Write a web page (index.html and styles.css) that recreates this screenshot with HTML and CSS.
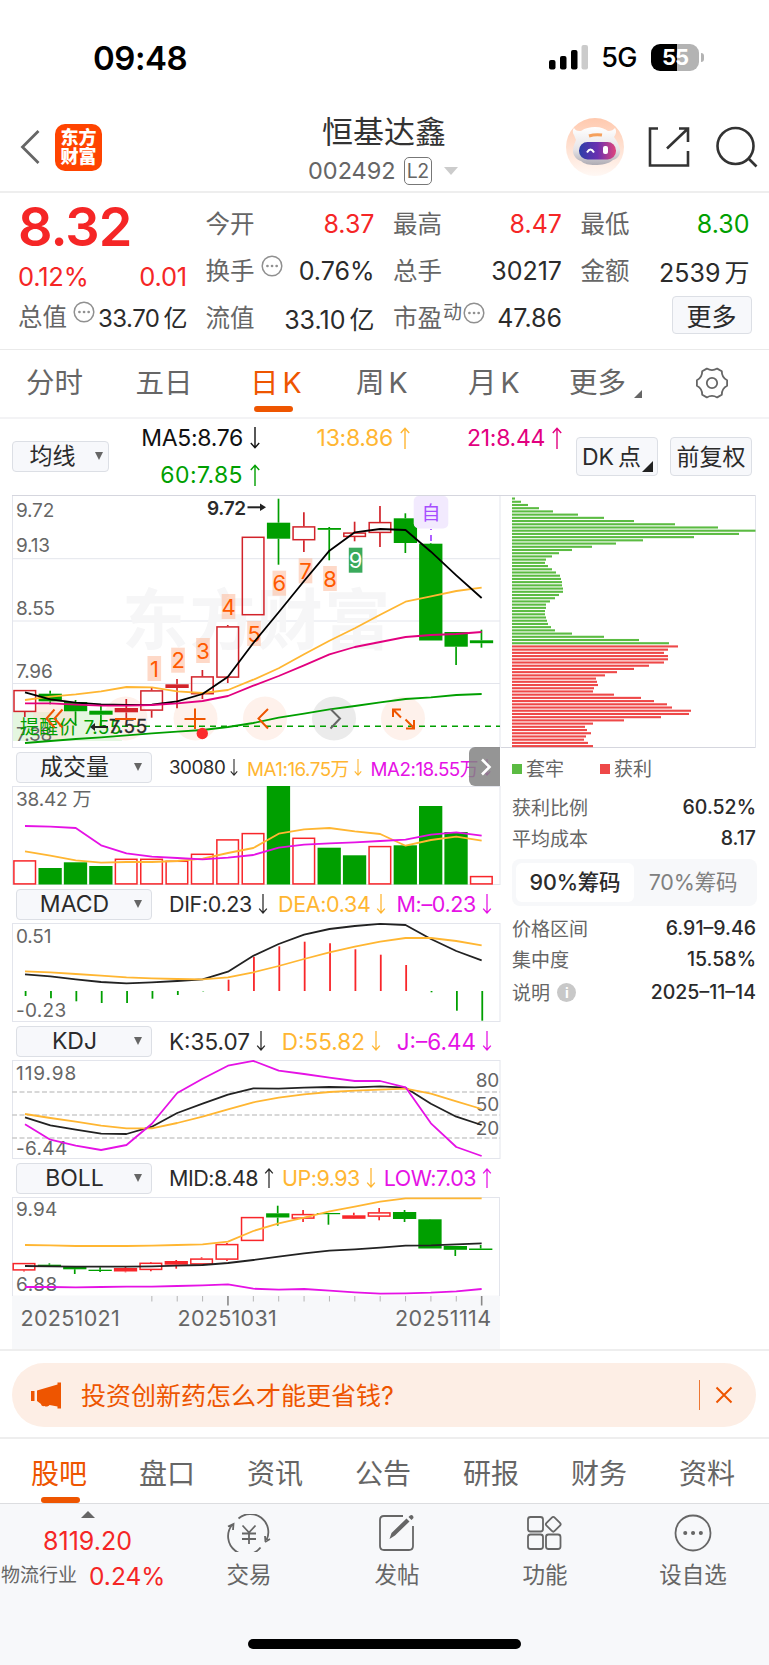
FILE: index.html
```html
<!DOCTYPE html>
<html lang="zh-CN">

<head>
    <meta charset="UTF-8">
    <meta name="viewport" content="width=device-width, initial-scale=1.0">
    <title>恒基达鑫 002492</title>
    <link rel="stylesheet" href="styles.css">
</head>

<body>

    <!-- Iconos compartidos -->
    <svg class="defs" width="0" height="0">
        <symbol id="i-up" viewBox="0 0 10 22"><path d="M5 22V1.5M.8 6L5 1.2 9.2 6" /></symbol>
        <symbol id="i-down" viewBox="0 0 10 22"><path d="M5 0v20.5M.8 16L5 20.8 9.2 16" /></symbol>
        <symbol id="i-more" viewBox="0 0 22 22"><circle cx="11" cy="11" r="9.8" /><path d="M6.4 11h.1M11 11h.1M15.6 11h.1" stroke-width="2.6" stroke-linecap="round" /></symbol>
    </svg>

    <div class="status">
        <span class="clock">09:48</span>
        <svg class="signal" width="40" height="25" viewBox="0 0 40 25">
            <rect x="0" y="15" width="6.5" height="9.5" rx="2" />
            <rect x="11" y="11" width="6.5" height="13.5" rx="2" />
            <rect x="22" y="5" width="6.5" height="19.5" rx="2" />
            <rect x="32.5" y="0" width="6.5" height="24.5" rx="2" fill="#cbcbcb" />
        </svg>
        <span class="net">5G</span>
        <span class="battery">55</span>
        <i class="nub"></i>
    </div>

    <header>
        <svg class="back" width="20" height="36" viewBox="0 0 20 36"><path d="M18.5 2L2.500 18l16 16" /></svg>
        <div class="logo">东方<br>财富</div>
        <div class="stock">
            <h1>恒基达鑫</h1>
            <p>002492 <b>L2</b> <i class="caret"></i></p>
        </div>
        <svg class="robot" width="58" height="58" viewBox="0 0 58 58">
            <defs>
                <linearGradient id="halo" x1="0" y1="0" x2="0" y2="1"><stop offset="0" stop-color="#ffc9ae" /><stop offset="1" stop-color="#fff8f4" /></linearGradient>
                <linearGradient id="visor" x1="0" y1="0" x2="1" y2="0"><stop offset="0" stop-color="#2b3fa8" /><stop offset=".5" stop-color="#6a2fb0" /><stop offset="1" stop-color="#e0457c" /></linearGradient>
                <linearGradient id="shell" x1="0" y1="0" x2="0" y2="1"><stop offset="0" stop-color="#fff" /><stop offset=".6" stop-color="#e6e3e6" /><stop offset="1" stop-color="#aeabb3" /></linearGradient>
            </defs>
            <circle cx="29" cy="29" r="29" fill="url(#halo)" />
            <path d="M8 17c-2-3-1-6 0-7 2 3 4 3 7 3 4-3 9-4 14-4 6 0 10 2 13 4 4 0 5-1 7-3 2 3 1 6-1 9 3 4 5 8 6 12 1 6-3 10-7 11-4 4-12 5-18 5s-11-1-14-4c-4-1-8-5-8-10 0-5 2-8 3-11z" fill="url(#shell)" />
            <path d="M23 18q6-2 13-1" stroke="#f5a05c" stroke-width="3" fill="none" />
            <rect x="13" y="24" width="37" height="17.500" rx="8.500" fill="url(#visor)" />
            <path d="M21 34.500q3.500-6 7 0" stroke="#fff" stroke-width="2" fill="none" />
            <rect x="37" y="28" width="5" height="8" rx="2" fill="#fff" />
        </svg>
        <svg class="share" width="42" height="40" viewBox="0 0 42 40"><path d="M10 1.500H2v37h38V24M31 1.500h9V15M40 1.500L19 21.500" /></svg>
        <svg class="search" width="42" height="42" viewBox="0 0 42 42"><circle cx="19.500" cy="20" r="18" /><path d="M32 32l8.500 8.500" /></svg>
    </header>

    <section class="quote">
        <div class="price">
            <strong>8.32</strong>
            <div class="red"><span>0.12%</span><span>0.01</span></div>
            <div class="row"><label>总值</label><svg class="dots"><use href="#i-more" /></svg><span>33.70<u>亿</u></span></div>
        </div>
        <div class="col">
            <div class="row"><label>今开</label><span class="red">8.37</span></div>
            <div class="row"><label>换手</label><svg class="dots"><use href="#i-more" /></svg><span>0.76%</span></div>
            <div class="row"><label>流值</label><span>33.10<u>亿</u></span></div>
        </div>
        <div class="col">
            <div class="row"><label>最高</label><span class="red">8.47</span></div>
            <div class="row"><label>总手</label><span>30217</span></div>
            <div class="row"><label>市盈<sup>动</sup></label><svg class="dots near"><use href="#i-more" /></svg><span>47.86</span></div>
        </div>
        <div class="col">
            <div class="row"><label>最低</label><span class="green">8.30</span></div>
            <div class="row"><label>金额</label><span>2539<u>万</u></span></div>
            <button class="btn more">更多</button>
        </div>
    </section>

    <nav class="periods">
        <a>分时</a>
        <a>五日</a>
        <a class="active">日<u>K</u></a>
        <a>周<u>K</u></a>
        <a>月<u>K</u></a>
        <a>更多<i class="corner"></i></a>
        <a><svg class="gear" width="34" height="32" viewBox="-17 -16 34 32"><path d="M15.100 2.700Q9.700 5.600 9.800 11.700L5.200 14.400Q0 11.200-5.200 14.400L-9.800 11.700Q-9.700 5.600-15.100 2.700V-2.700Q-9.700-5.600-9.800-11.700L-5.200-14.400Q0-11.200 5.200-14.400L9.800-11.700Q9.700-5.600 15.100-2.700Z" /><circle r="5.200" /></svg></a>
    </nav>

    <div class="averages">
        <button class="btn select small">均线<i></i></button>
        <div class="ma">
            <span>MA5:8.76<svg><use href="#i-down" /></svg></span>
            <span class="yellow">13:8.86<svg><use href="#i-up" /></svg></span>
            <span class="pink">21:8.44<svg><use href="#i-up" /></svg></span>
            <span class="green wide">60:7.85<svg><use href="#i-up" /></svg></span>
        </div>
        <button class="btn dk">DK<u>点</u><i class="corner"></i></button>
        <button class="btn">前复权</button>
    </div>

    <main>
        <div class="charts">
            <svg id="kline" width="489" height="253" viewBox="12 495 489 253"></svg>

            <div class="bar">
                <button class="btn select">成交量<i></i></button>
                <div class="legend volume">
                    <span>30080<svg><use href="#i-down" /></svg></span>
                    <span class="yellow">MA1:16.75万<svg><use href="#i-down" /></svg></span>
                    <span class="magenta">MA2:18.55万<svg><use href="#i-down" /></svg></span>
                </div>
                <div class="drawer"><svg width="12" height="18" viewBox="0 0 12 18"><path d="M2 1.500L9.500 9 2 16.500" /></svg></div>
            </div>
            <svg id="volume" width="489" height="99" viewBox="12 786 489 99"></svg>

            <div class="bar">
                <button class="btn select">MACD<i></i></button>
                <div class="legend">
                    <span>DIF:0.23<svg><use href="#i-down" /></svg></span>
                    <span class="yellow">DEA:0.34<svg><use href="#i-down" /></svg></span>
                    <span class="magenta">M:–0.23<svg><use href="#i-down" /></svg></span>
                </div>
            </div>
            <svg id="macd" width="489" height="99" viewBox="12 923 489 99"></svg>

            <div class="bar">
                <button class="btn select">KDJ<i></i></button>
                <div class="legend kdj">
                    <span>K:35.07<svg><use href="#i-down" /></svg></span>
                    <span class="yellow">D:55.82<svg><use href="#i-down" /></svg></span>
                    <span class="magenta">J:–6.44<svg><use href="#i-down" /></svg></span>
                </div>
            </div>
            <svg id="kdj" width="489" height="99" viewBox="12 1060 489 99"></svg>

            <div class="bar">
                <button class="btn select">BOLL<i></i></button>
                <div class="legend boll">
                    <span>MID:8.48<svg><use href="#i-up" /></svg></span>
                    <span class="yellow">UP:9.93<svg><use href="#i-down" /></svg></span>
                    <span class="magenta">LOW:7.03<svg><use href="#i-up" /></svg></span>
                </div>
            </div>
            <svg id="boll" width="489" height="152" viewBox="12 1197 489 152"></svg>
        </div>

        <aside>
            <svg id="chips" width="256" height="253" viewBox="501 495 256 253"></svg>
            <div class="key"><span><i></i>套牢</span><span><i class="win"></i>获利</span></div>
            <div class="info"><span>获利比例</span><b>60.52%</b></div>
            <div class="info"><span>平均成本</span><b>8.17</b></div>
            <div class="toggle"><span class="on">90%筹码</span><span>70%筹码</span></div>
            <div class="info"><span>价格区间</span><b>6.91–9.46</b></div>
            <div class="info"><span>集中度</span><b>15.58%</b></div>
            <div class="info last"><span>说明 <em>i</em></span><b>2025–11–14</b></div>
        </aside>
    </main>

    <div class="promo">
        <div class="banner">
            <svg width="31" height="27" viewBox="0 0 31 27"><path d="M0 9h3.500v10H0zM6 8.500L26.500 2.500V.5H30v26h-3.500v-2l-8-1.500c-1 1.500-3.500 2-5 1-2 .500-3.500-.500-3.500-2L6 19z" /></svg>
            <span>投资创新药怎么才能更省钱?</span>
            <svg class="close" width="18" height="18" viewBox="0 0 18 18"><path d="M1.500 1.500l15 15M16.500 1.500l-15 15" /></svg>
        </div>
    </div>

    <nav class="sections">
        <a class="active">股吧</a>
        <a>盘口</a>
        <a>资讯</a>
        <a>公告</a>
        <a>研报</a>
        <a>财务</a>
        <a>资料</a>
    </nav>

    <footer>
        <div class="index">
            <i></i>
            <strong>8119.20</strong>
            <p>物流行业 <b>0.24%</b></p>
        </div>
        <a>
            <svg width="44" height="38" viewBox="0 0 44 38"><path d="M11.500 4.500A18 18 0 0 1 39.500 26M38.500 28l-.5-6M38 28l5-3M33.500 33.500A18 18 0 0 1 5 11M1 12.500l5.500-2.500-.5 6M15.500 11.500l6.500 7 6.500-7M22 18.500V30M15 19.500h14M15 25h14" /></svg>
            <span>交易</span>
        </a>
        <a>
            <svg width="44" height="38" viewBox="0 0 44 38"><path d="M28 2H9Q5 2 5 6v26q0 4 4 4h25q4 0 4-4V12" /><path d="M14.500 25l2-6L31.500 4.500l3 3L20 21.500zM33.500 3l1.500-1.500q2-1 3 .5t0 2.500L36.500 6z" fill="#666" stroke="none" /></svg>
            <span>发帖</span>
        </a>
        <a>
            <svg width="44" height="38" viewBox="0 0 44 38"><rect x="5" y="3" width="15" height="14.500" rx="2.500" /><rect x="5" y="20.500" width="15" height="14.500" rx="2.500" /><rect x="23" y="20.500" width="14.500" height="14.500" rx="2.500" /><rect x="24.500" y="4.500" width="11.500" height="11.500" rx="2" transform="rotate(45 30.250 10.250)" /></svg>
            <span>功能</span>
        </a>
        <a>
            <svg width="44" height="38" viewBox="0 0 44 38"><circle cx="22" cy="19" r="17.500" /><path d="M14.200 19h.1M22 19h.1M29.800 19h.1" stroke-width="4" stroke-linecap="round" /></svg>
            <span>设自选</span>
        </a>
        <div class="home"></div>
    </footer>

    <script src="script.js"></script>
</body>

</html>
```
FILE: styles.css
```css
* {
    box-sizing: border-box;
}

body {
    font-family: Inter, "Noto Sans CJK SC", sans-serif;
    width: 769px;
    margin: 0;
    background: #fff;
    color: #2b2b2b;
}

svg {
    display: block;
    flex: none;
    fill: none;
}

.defs {
    position: absolute;
}

h1, p {
    margin: 0;
    font-weight: 400;
}

i, em {
    font-style: normal;
}

/* Unidad separada de la cifra */
u {
    margin-left: 4px;
    text-decoration: none;
}

.red { color: #f52626; }
.green { color: #009f00; }
.yellow { color: #ffb632; }
.pink { color: #e2007f; }
.magenta { color: #e512e5; }

/* Barra de estado */
.status {
    height: 107px;
    padding: 8px 65px 0 93px;
    display: flex;
    align-items: center;
    color: #000;
}

.clock {
    font-size: 33px;
    font-weight: 600;
    letter-spacing: -0.5px;
    margin-right: auto;
}

.signal {
    fill: #000;
}

.net {
    font-size: 27px;
    font-weight: 500;
    letter-spacing: -0.5px;
    margin: 0 14px 0 12px;
}

.battery {
    width: 48px;
    height: 27px;
    border-radius: 9px;
    background: linear-gradient(90deg, #000 55%, #b3b3b3 55%);
    color: #fff;
    font-size: 22px;
    font-weight: 700;
    line-height: 27px;
    letter-spacing: -1px;
    text-align: center;
}

.nub {
    width: 3px;
    height: 9px;
    margin-left: 2px;
    border-radius: 0 4px 4px 0;
    background: #b3b3b3;
}

/* Cabecera */
header {
    height: 86px;
    padding: 0 11px 4px 20px;
    display: flex;
    align-items: center;
    border-bottom: 2px solid #eee;
}

.back path {
    stroke: #666;
    stroke-width: 2.8;
}

.logo {
    flex: none;
    width: 47px;
    height: 47px;
    margin: 0 186px 0 15px;
    padding-top: 4px;
    border-radius: 10px;
    background: #ff4400;
    color: #fff;
    font-size: 18px;
    font-weight: 900;
    line-height: 19.5px;
    text-align: center;
}

.stock {
    flex: none;
    width: 192px;
    padding-top: 9px;
    text-align: center;
    white-space: nowrap;
}

.stock h1 {
    font-size: 31px;
    line-height: 38px;
    color: #333;
}

.stock p {
    display: flex;
    align-items: center;
    height: 40px;
    padding-left: 20px;
    font-size: 23.5px;
    color: #666;
}

.stock b {
    width: 28px;
    height: 28px;
    margin: 0 12px 0 8px;
    border: 1.5px solid #777;
    border-radius: 5px;
    font-size: 19.5px;
    font-weight: 400;
    line-height: 27px;
    letter-spacing: -0.5px;
}

.caret {
    border: 7px solid transparent;
    border-top: 8px solid #ccc;
    border-bottom: 0;
}

.robot {
    margin: 0 24px 0 86px;
}

.share, .search {
    stroke: #333;
    stroke-width: 2.6;
}

.search {
    margin-left: 26px;
}

/* Cotización */
.quote {
    display: grid;
    grid-template-columns: repeat(4, 169px);
    column-gap: 18.500px;
    height: 157px;
    padding: 7px 0 0 18px;
    border-bottom: 1px solid #eaeaea;
    font-size: 25px;
}

.price strong {
    display: block;
    height: 54px;
    font-size: 54px;
    font-weight: 600;
    line-height: 54px;
    letter-spacing: -1px;
    color: #f52626;
}

.price .red {
    display: flex;
    justify-content: space-between;
    font-size: 25.5px;
    line-height: 46px;
    letter-spacing: -0.2px;
}

.row {
    display: flex;
    align-items: center;
    height: 47px;
    white-space: nowrap;
}

.price .row {
    height: 33px;
    font-size: 24px;
    letter-spacing: -0.5px;
}

.row span {
    margin-left: auto;
}

.row label {
    padding-bottom: 3px;
    font-size: 24.5px;
    letter-spacing: 0;
    color: #666;
}

.row sup {
    font-size: 19px;
    line-height: 1;
    vertical-align: 8px;
    margin-left: 1px;
}

.dots {
    width: 22px;
    height: 22px;
    margin: 0 0 10px 6px;
    stroke: #909090;
    stroke-width: 1.5;
}

.dots.near {
    margin-left: 1px;
}

.btn {
    border: 1px solid #dcdfe5;
    border-radius: 4px;
    background: #f7f8fb;
    font-family: inherit;
    color: #2b2b2b;
    padding: 0 0 3px;
    white-space: nowrap;
}

.more {
    display: block;
    width: 80px;
    height: 38px;
    margin: 2px 0 0 91px;
    font-size: 25px;
}

/* Periodos */
.periods {
    display: flex;
    align-items: center;
    height: 69px;
    padding: 0 0 2px 26px;
    border-bottom: 2px solid #f3f3f5;
    font-size: 28.5px;
    color: #666;
}

.periods a {
    position: relative;
    width: 109.500px;
    white-space: nowrap;
    line-height: 67px;
}

.periods a:nth-child(3) { width: 106px; margin-left: 5px; }
.periods a:nth-child(4) { width: 112px; }
.periods a:nth-child(5) { width: 101px; }
.periods a:nth-child(6) { width: 126px; }
.periods a:nth-child(7) { width: 40px; }

.periods .active, .sections .active {
    color: #ee5500;
}

.periods .active::after, .sections .active::after {
    content: "";
    position: absolute;
    left: 4px;
    bottom: 4px;
    width: 39px;
    height: 6px;
    border-radius: 3px;
    background: #ee5500;
}

.corner {
    display: inline-block;
    margin-left: 8px;
    border-left: 8px solid transparent;
    border-bottom: 8px solid #666;
    vertical-align: -5px;
}

.gear {
    stroke: #666;
    stroke-width: 1.8;
    stroke-linejoin: round;
}

/* Medias móviles */
.averages {
    display: flex;
    height: 76px;
    padding-left: 12px;
    font-size: 23px;
}

.averages > .btn {
    width: 82px;
    height: 39px;
    margin: 18px 12px 0 0;
    font-size: 23px;
}

.averages > .dk {
    position: relative;
    padding-left: 5px;
    text-align: left;
}

.dk .corner {
    position: absolute;
    right: 4px;
    bottom: 3px;
    border-left-width: 11px;
    border-bottom: 11px solid #222;
}

.ma {
    display: grid;
    grid-template-columns: 124px 150px 152px;
    grid-auto-rows: 37px;
    width: 440px;
    color: #111;
}

.ma span {
    display: flex;
    align-items: center;
    justify-content: flex-end;
    letter-spacing: -0.3px;
    white-space: nowrap;
}

.ma .wide {
    letter-spacing: 0.4px;
}

.ma svg, .legend svg {
    width: 10px;
    height: 22px;
    margin-left: 7px;
    stroke: currentColor;
    stroke-width: 1.4;
}

.select {
    position: relative;
    width: 136px;
    height: 31px;
    padding: 0 19px 2px 0;
    font-size: 23px;
    line-height: 28px;
    text-align: center;
}

.select i {
    position: absolute;
    right: 9px;
    top: 10px;
    border: 4.5px solid transparent;
    border-top: 8px solid #666;
    border-bottom: 0;
}

.averages > .small {
    width: 97px;
    height: 31px;
    margin: 22px 27px 0 0;
    padding-right: 16px;
}

.small i {
    right: 5px;
}

/* Gráficos */
main {
    display: flex;
    padding-left: 12px;
}

.charts {
    width: 489px;
}

.bar {
    position: relative;
    display: flex;
    align-items: center;
    height: 38px;
    padding-left: 4px;
}

.legend {
    display: flex;
    flex: 1;
    align-items: center;
    justify-content: space-between;
    padding: 0 9px 0 17px;
    font-size: 21.5px;
    letter-spacing: -0.35px;
    white-space: nowrap;
}

.legend.volume {
    font-size: 18.8px;
    letter-spacing: -0.5px;
}

.legend.kdj {
    font-size: 22.5px;
    letter-spacing: 0;
}

.legend.boll {
    letter-spacing: -0.5px;
}

.legend span {
    display: flex;
    align-items: center;
}

.legend svg {
    height: 20px;
    margin-left: 6px;
}

.legend.volume svg {
    height: 17px;
    margin-left: 4px;
}

.drawer {
    position: absolute;
    right: 1px;
    top: -1px;
    width: 31px;
    height: 39px;
    padding: 11px 0 0 11px;
    border-radius: 6px 0 0 6px;
    background: rgba(130, 130, 130, 0.85);
}

.drawer path {
    stroke: #fff;
    stroke-width: 2.6;
}

.charts text {
    font-size: 19px;
    fill: #666;
    letter-spacing: -0.2px;
}

.charts text.mark {
    font-size: 66px;
    font-weight: 700;
    fill: #f6f6f7;
}

.charts text.strong {
    font-weight: 600;
    fill: #2b2b2b;
}

.charts text.num {
    font-size: 22px;
    fill: #ff5a00;
    text-anchor: middle;
}

.charts text.date {
    font-size: 21.5px;
}

/* Panel de costes */
aside {
    width: 256px;
    color: #666;
    font-size: 19px;
}

.key {
    display: flex;
    height: 43px;
    padding-left: 11px;
    line-height: 43px;
}

.key span {
    width: 88px;
}

.key i {
    display: inline-block;
    width: 10px;
    height: 10px;
    margin-right: 4px;
    background: #5bbb42;
    vertical-align: 2px;
}

.key .win {
    background: #ee4848;
}

.info {
    display: flex;
    align-items: center;
    justify-content: space-between;
    height: 31px;
    padding: 0 1px 0 11px;
    white-space: nowrap;
}

.info b {
    font-weight: 500;
    font-size: 19.500px;
    color: #2b2b2b;
}

.info.last {
    height: 35px;
}

.info em {
    display: inline-block;
    width: 19px;
    height: 19px;
    margin-left: 2px;
    border-radius: 50%;
    background: #c8c8c8;
    color: #fff;
    font-size: 14px;
    font-weight: 700;
    line-height: 19px;
    text-align: center;
    vertical-align: 2px;
}

.toggle {
    display: flex;
    height: 47px;
    margin: 6px 0 6px 11px;
    padding: 4px;
    border-radius: 8px;
    background: #f7f8fa;
    font-size: 21.5px;
    line-height: 38px;
    text-align: center;
    color: #808080;
    letter-spacing: -0.2px;
}

.toggle span {
    width: 118px;
    height: 39px;
}

.toggle .on {
    border-radius: 6px;
    background: #fff;
    font-weight: 500;
    color: #2b2b2b;
}

/* Aviso */
.promo {
    height: 90px;
    padding: 12px 13px 0 12px;
    border-top: 2px solid #eee;
    border-bottom: 2px solid #eee;
}

.banner {
    display: flex;
    align-items: center;
    height: 64px;
    padding: 0 23px 0 19px;
    border-radius: 32px;
    background: #fdeee5;
    color: #ee5500;
    font-size: 25px;
}

.banner svg {
    fill: #ee5500;
}

.banner span {
    flex: 1;
    margin-left: 19px;
    padding-bottom: 3px;
}

.banner .close {
    box-sizing: content-box;
    padding: 6px 0 6px 15px;
    border-left: 1.5px solid #ee7733;
    stroke: #ee5500;
    stroke-width: 2;
}

.sections {
    display: flex;
    height: 65px;
    padding-left: 5px;
    border-bottom: 1px solid #dcdde0;
    font-size: 28px;
    line-height: 70px;
    color: #666;
}

.sections a {
    position: relative;
    width: 108px;
    text-align: center;
}

.sections .active::after {
    left: 36px;
    bottom: 0;
}

/* Barra inferior */
footer {
    position: relative;
    display: flex;
    height: 161px;
    background: #f7f8fa;
    color: #666;
}

.index {
    width: 175px;
    text-align: center;
    white-space: nowrap;
}

.index i {
    display: block;
    width: 14px;
    margin: 7px 0 0 81px;
    border: 7px solid transparent;
    border-top: 0;
    border-bottom-color: #666;
}

.index strong {
    display: block;
    height: 40px;
    font-size: 25px;
    font-weight: 400;
    line-height: 46px;
    color: #f52626;
}

.index p {
    display: flex;
    align-items: center;
    padding-left: 1px;
    font-size: 19px;
    line-height: 36px;
}

.index b {
    margin-left: 12px;
    font-size: 24.5px;
    font-weight: 400;
    color: #f52626;
}

footer a {
    width: 148px;
    padding-top: 10px;
    text-align: center;
    font-size: 22.5px;
}

footer a span {
    display: block;
    line-height: 46px;
}

footer a svg {
    margin: 0 auto;
    stroke: #666;
    stroke-width: 1.8;
}

.home {
    position: absolute;
    left: 248px;
    bottom: 16px;
    width: 273px;
    height: 10px;
    border-radius: 5px;
    background: #000;
}
```
FILE: script.js
```javascript
const RED = "#d2232a";
const BRIGHT = "#f8262a";
const GREEN = "#009f00";
const YELLOW = "#ffb632";
const PINK = "#e2007f";
const MAGENTA = "#e512e5";
const DARK = "#222";
const GRID = "#e3e5ec";

const xAt = (i) => 25 + i * 25.37;

const line = (x1, y1, x2, y2, color, width = 1, extra = "") =>
    `<line x1="${x1}" y1="${y1}" x2="${x2}" y2="${y2}" stroke="${color}" stroke-width="${width}" ${extra}/>`;

const rect = (x, y, w, h, fill, extra = "") =>
    `<rect x="${x}" y="${y}" width="${w}" height="${h}" fill="${fill}" ${extra}/>`;

const text = (x, y, value, extra = "") => `<text x="${x}" y="${y}" ${extra}>${value}</text>`;

const curve = (ys, color, width = 1.8) =>
    `<polyline points="${ys.map((y, i) => xAt(i) + "," + y).join(" ")}" stroke="${color}" stroke-width="${width}" stroke-linejoin="round"/>`;

const frame = (y, h) => rect(12.5, y + 0.5, 487.5, h - 1, "none", `stroke="${GRID}"`);

// [tipo, techo, suelo, máximo, mínimo]; h = hueca, r = roja llena, g = verde
function candles(data, red, shift = 0) {
    return data.map(([type, top, bottom, high, low], i) => {
        const x = xAt(i) + shift;
        const color = type === "g" ? GREEN : red;
        let out = "";
        if (high < top) out += line(x, high, x, top, color, 1.7);
        if (low > bottom) out += line(x, bottom, x, low, color, 1.7);
        if (type === "h") {
            out += rect(x - 10.8, top + 0.6, 21.6, bottom - top - 1.2, "none", `stroke="${color}" stroke-width="1.5"`);
        } else {
            out += rect(x - 11.6, top, 23.3, bottom - top, color);
        }
        return out;
    }).join("");
}

function draw(id, parts) {
    document.getElementById(id).innerHTML = parts.join("");
}

/* Velas diarias */
const tags = [[154.3, 656], [178, 647.7], [203, 638], [228.5, 594], [254, 621], [279.3, 570.7], [305.5, 558.3], [330, 566], [355.6, 547.7]];
const round = (x, color) => `<circle cx="${x}" cy="718.5" r="22" fill="${color}"/>`;
const icon = (d, color = "#ee5500") => `<path d="${d}" stroke="${color}" stroke-width="2"/>`;

draw("kline", [
    frame(495, 253),
    line(12, 495.5, 501, 495.5, "#d5d6de"),
    line(12, 558.7, 500, 558.7, GRID), line(12, 621, 500, 621, GRID), line(12, 683.5, 500, 683.5, GRID),
    text(122, 644, "东方财富", 'class="mark" textLength="268"'),
    rect(13, 712, 109, 29, "#e4f6e0"),
    round(55, "rgba(252,222,205,.5)"),
    [125.5, 195.5, 265, 403].map((x) => round(x, "#fef1eb")).join(""),
    round(334, "#ebebeb"),
    text(16, 516.5, "9.72"), text(16, 551.5, "9.13"), text(16, 614.5, "8.55"), text(16, 677.5, "7.96"), text(16, 741, "7.38"),
    line(122, 726.3, 500, 726.3, GREEN, 1.6, 'stroke-dasharray="6 5"'),
    candles([
        ["h", 690, 712, 690, 717], ["g", 693.7, 701.3, 690.7, 704.3], ["g", 702, 711.3, 700, 725.3], ["g", 710.7, 714.7, 705, 727],
        ["r", 708, 712.3, 699, 718], ["h", 690.3, 710.7, 688, 717.7], ["r", 684.3, 688, 679, 708.3], ["h", 676.3, 694.3, 670, 699],
        ["h", 626.3, 677.7, 625, 683], ["h", 536.7, 615.3, 537, 615], ["g", 522.7, 538.7, 498.7, 564.7], ["h", 526.3, 540.3, 512.3, 552],
        ["g", 528, 529.8, 527, 560.3], ["h", 532.5, 537, 521.7, 541.3], ["h", 522, 533, 506, 547], ["g", 518.3, 543, 513.3, 553],
        ["g", 543.7, 640.5, 543, 640], ["g", 632, 646.7, 632, 665], ["g", 640.3, 643.2, 629.7, 647.7]
    ], RED, -0.2),
    tags.map(([x, y], i) => rect(x - 6.8, y, 13.6, 25, i === 8 ? "#3aaa5c" : "rgba(253,180,145,.5)") +
        text(x, y + 20.5, i + 1, `class="num"${i === 8 ? ' style="fill:#fff"' : ""}`)).join(""),
    curve([743, 741, 739, 737.3, 735.3, 733.3, 731.7, 730, 727, 723, 717.7, 713.7, 709.3, 706, 702.3, 699, 697.3, 695, 694], GREEN),
    curve([700, 696.7, 694.3, 691.3, 687, 687.3, 691.3, 693, 690, 679.7, 668.3, 654.3, 640.7, 628.3, 614.7, 601.7, 596.3, 591, 587.7], YELLOW),
    curve([692.3, 699.3, 702.7, 704.3, 705, 704.7, 701.3, 694, 676.7, 643, 612.3, 581, 550.7, 532.3, 529, 530, 551.7, 575.3, 598], "#000"),
    curve([703.3, 703.3, 704.7, 705.7, 705.7, 705, 703.3, 701, 696, 685.7, 676, 665.3, 654.3, 647, 642, 637, 635, 634, 632], PINK),
    text(207, 514.5, "9.72", 'class="strong" textLength="39"'),
    icon("M247.500 507.300H262", DARK), `<path d="M260 503.500l6 3.800-6 3.800z" fill="${DARK}"/>`,
    rect(413.7, 496, 34.6, 32.500, "#f2eafe", 'rx="5"'),
    text(431, 519.5, "自", 'class="num" style="fill:#a64dff;font-size:19px"'),
    line(431, 529, 431, 543, "#a64dff", 1.8, 'stroke-dasharray="1 5 6 4"'),
    text(20, 734, "提醒价 7.55", 'style="fill:#009f00" textLength="101"'),
    icon("M92 727H108", DARK), `<path d="M95 723l-5 4 5 4z" fill="${DARK}"/>`,
    text(109, 733, "7.55", 'style="fill:#2b2b2b;stroke:#2b2b2b;stroke-width:.3" textLength="38"'),
    icon("M54.500 709.500l-8 9 8 9M62.500 709.500l-8 9 8 9"),
    icon("M115 719h21"), icon("M184.500 719H205.500M195 708.500V729"),
    icon("M268 709l-9.500 9.500 9.500 10"), icon("M330.500 709l9.500 9.500-9.500 10", "#666"),
    icon("M401 709.500h-8v7.500M393 709.500l8 8M414 720v8.500h-8M405.500 719.500l8 8"),
    `<circle cx="202.300" cy="733.500" r="5.700" fill="#fb2b2b"/>`
]);

/* Volumen */
const volumes = [["r", 860.3], ["g", 868], ["g", 862.3], ["g", 866], ["r", 858.7], ["r", 858.7], ["r", 860.7], ["r", 853.7], ["r", 839.3], ["r", 833],
    ["g", 786], ["r", 837.7], ["g", 847.7], ["g", 855.3], ["r", 846], ["g", 845.3], ["g", 806], ["g", 832], ["r", 876]];

draw("volume", [
    frame(786, 99),
    text(16, 805.7, "38.42"), text(72.5, 805.7, "万"),
    candles(volumes.map(([c, y]) => [c === "r" ? "h" : "g", y, 884.5, y, 884]), BRIGHT, -0.3),
    curve([851.3, 855.7, 860.3, 862.7, 862, 862, 861, 858.7, 853, 848, 833.7, 829.3, 828, 831.3, 834, 845.7, 840, 836.7, 840.7], YELLOW),
    curve([826, 826.7, 828, 845.3, 853.3, 856.7, 858, 859.3, 857.7, 855, 847.7, 844.7, 843.3, 842.3, 841, 839.7, 834.7, 832.3, 835.7], MAGENTA)
]);

/* MACD */
const hist = [996, 998.3, 1001.3, 1003, 1003, 998.7, 995, 991.4, 979.7, 956.7, 946.3, 941.7, 943.3, 949.3, 954.7, 965, 992.3, 1010.7, 1020.7];

draw("macd", [
    frame(923, 99),
    text(16, 942.7, "0.51"), text(16, 1017.3, "-0.23", 'textLength="50"'),
    hist.map((y, i) => line(xAt(i) + 0.6, 991, xAt(i) + 0.6, y, y > 991 ? GREEN : BRIGHT, 1.8)).join(""),
    curve([974.3, 976.3, 979.3, 982, 983.3, 982.3, 981, 979.3, 971.7, 955.7, 944, 934.7, 929, 926, 923.9, 925, 939, 951, 960.3], DARK),
    curve([971.3, 972.3, 974, 975.7, 977.3, 978.3, 979, 979.3, 977.3, 972.3, 966, 959, 952.3, 946.7, 941.7, 938, 938, 941, 945.3], YELLOW)
]);

/* KDJ */
draw("kdj", [
    frame(1060, 99),
    [1092, 1115, 1138].map((y) => line(12, y, 500, y, "#ccc", 1.5, 'stroke-dasharray="5 2.500"')).join(""),
    text(16, 1080, "119.98", 'textLength="60"'), text(16, 1154.7, "-6.44", 'textLength="51"'),
    text(499, 1087.3, "80", 'text-anchor="end"'), text(499, 1111, "50", 'text-anchor="end"'), text(499, 1134.7, "20", 'text-anchor="end"'),
    curve([1117.3, 1125.3, 1129.7, 1133.7, 1134, 1126.7, 1113, 1103.7, 1094.7, 1088.3, 1088.7, 1087.7, 1087, 1087.3, 1086.3, 1087.7, 1103.7, 1116.7, 1125], DARK),
    curve([1114, 1118, 1121.7, 1125.7, 1128.3, 1128.3, 1123, 1116.7, 1109.3, 1102.3, 1097.7, 1094.3, 1092, 1090.7, 1089.7, 1088.7, 1093.7, 1101.3, 1109], YELLOW),
    curve([1124.3, 1139.7, 1145.7, 1150, 1145, 1123.7, 1093, 1078.7, 1065.7, 1060.9, 1070.7, 1074, 1077.7, 1081, 1081, 1087.3, 1123.3, 1147, 1156], MAGENTA)
]);

/* BOLL y eje de fechas */
const ticks = [];
for (let i = 5; i < 19; i++) {
    const big = i === 8 || i === 18;
    ticks.push(line(xAt(i), 1296, xAt(i), big ? 1305.5 : 1301.5, big ? "#888" : "#b5b5b5", big ? 1.6 : 1));
}

draw("boll", [
    rect(12, 1295.5, 488, 54, "#f7f8fa"),
    line(12, 1197.5, 500, 1197.5, GRID), line(12.5, 1197, 12.5, 1296, GRID), line(499.5, 1197, 499.5, 1296, GRID),
    text(16, 1216.3, "9.94", 'textLength="41"'), text(16, 1291.3, "6.88", 'textLength="41"'),
    candles([
        ["h", 1263, 1270.5, 1263, 1271.5], ["g", 1264.7, 1266, 1263.3, 1267], ["g", 1267, 1269.3, 1267, 1274], ["g", 1269.7, 1271, 1267.3, 1272],
        ["r", 1268, 1271.5, 1266.3, 1272.3], ["h", 1262.7, 1270, 1262, 1271.3], ["r", 1261, 1264.7, 1260, 1268.7], ["h", 1258.5, 1264.5, 1257.3, 1265.3],
        ["h", 1244, 1259.7, 1243, 1261], ["h", 1217, 1241, 1217, 1240], ["g", 1213.3, 1217.5, 1205.7, 1225.7], ["h", 1214, 1218.7, 1210, 1222],
        ["g", 1213, 1214.2, 1213, 1224.7], ["r", 1215.3, 1218.8, 1212.7, 1219], ["h", 1212.3, 1216.7, 1208, 1220.3], ["g", 1212, 1219, 1210, 1222],
        ["g", 1219.3, 1248.5, 1219, 1248], ["g", 1246, 1249.8, 1246, 1256], ["g", 1248.5, 1250, 1245, 1250]
    ], BRIGHT, -1),
    curve([1245, 1245.3, 1246, 1246, 1246, 1245.7, 1245, 1244.3, 1241.7, 1231, 1223.3, 1217.7, 1211.3, 1206.7, 1201.7, 1198.3, 1198.3, 1198.3, 1198.3], YELLOW),
    curve([1266, 1266.3, 1266.7, 1266.7, 1266.7, 1266.3, 1265.7, 1265, 1263, 1260, 1256.7, 1253.3, 1250.7, 1249.3, 1247.7, 1245.7, 1245.3, 1244.3, 1243.3], DARK),
    curve([1287, 1287, 1287.3, 1287, 1286.7, 1286.7, 1286, 1285.3, 1284.3, 1288.7, 1289.7, 1289, 1290.7, 1292.3, 1293.7, 1293.3, 1292.7, 1291.3, 1289], MAGENTA),
    ticks.join(""),
    text(20.5, 1326.3, "20251021", 'class="date" textLength="99"'),
    text(177.5, 1326.3, "20251031", 'class="date" textLength="99"'),
    text(395, 1326.3, "20251114", 'class="date" textLength="96"')
]);

/* Distribución de fichas: las 46 primeras filas están atrapadas */
const chips = [3, 9, 16, 27, 41, 66, 92, 122, 163, 206, 243.5, 227, 182, 131, 104, 80, 60, 47, 40, 34, 33, 36, 40, 44, 48, 49, 50, 50, 51, 51, 47, 43, 38, 34, 34, 33, 33, 34, 35, 36, 39, 43, 60, 92, 127, 157,
    166, 156, 152, 156, 156, 152, 137, 122, 105, 93, 84, 85, 86, 82, 81, 102, 129, 142, 155, 160, 179, 177, 149, 112, 81, 73, 75, 79, 74, 72, 76, 81];

draw("chips", [
    line(501, 495.5, 756, 495.5, "#d5d6de"), line(501, 747.5, 756, 747.5, "#d5d6de"), line(755.5, 495, 755.5, 748, GRID),
    chips.map((w, i) => rect(512, 497.5 + i * 3.215, w, 2.1, i < 46 ? "#5bbb42" : "#ee4848")).join("")
]);
```
